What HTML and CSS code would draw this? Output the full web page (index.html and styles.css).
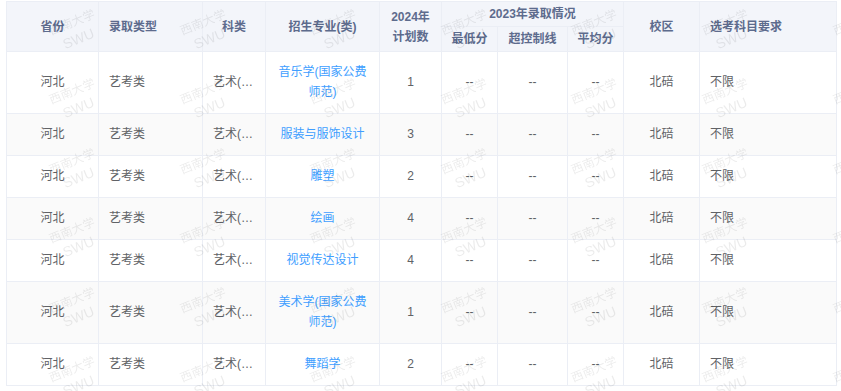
FILE: index.html
```html
<!DOCTYPE html>
<html lang="zh-CN">
<head>
    <meta charset="UTF-8">
    <meta name="viewport" content="width=device-width, initial-scale=1.0">
    <title>招生计划</title>
    <link rel="stylesheet" href="styles.css">
</head>
<body>

    <div class="page">
        <!-- 招生计划表 -->
        <table class="plan-table">
            <colgroup>
                <col style="width: 92px">
                <col style="width: 104px">
                <col style="width: 63px">
                <col style="width: 114px">
                <col style="width: 62px">
                <col style="width: 56px">
                <col style="width: 70px">
                <col style="width: 56px">
                <col style="width: 76px">
                <col style="width: 137px">
            </colgroup>
            <thead>
                <tr>
                    <th rowspan="2">省份</th>
                    <th rowspan="2" class="left">录取类型</th>
                    <th rowspan="2">科类</th>
                    <th rowspan="2">招生专业(类)</th>
                    <th rowspan="2" class="narrow">2024年<br>计划数</th>
                    <th colspan="3">2023年录取情况</th>
                    <th rowspan="2">校区</th>
                    <th rowspan="2" class="left">选考科目要求</th>
                </tr>
                <tr class="sub">
                    <th>最低分</th>
                    <th>超控制线</th>
                    <th>平均分</th>
                </tr>
            </thead>
            <tbody>
                <tr>
                    <td>河北</td><td class="left">艺考类</td><td class="left clip">艺术(不分文理)</td>
                    <td class="major">音乐学(国家公费师范)</td><td>1</td>
                    <td>--</td><td>--</td><td>--</td><td>北碚</td><td class="left">不限</td>
                </tr>
                <tr>
                    <td>河北</td><td class="left">艺考类</td><td class="left clip">艺术(不分文理)</td>
                    <td class="major">服装与服饰设计</td><td>3</td>
                    <td>--</td><td>--</td><td>--</td><td>北碚</td><td class="left">不限</td>
                </tr>
                <tr>
                    <td>河北</td><td class="left">艺考类</td><td class="left clip">艺术(不分文理)</td>
                    <td class="major">雕塑</td><td>2</td>
                    <td>--</td><td>--</td><td>--</td><td>北碚</td><td class="left">不限</td>
                </tr>
                <tr>
                    <td>河北</td><td class="left">艺考类</td><td class="left clip">艺术(不分文理)</td>
                    <td class="major">绘画</td><td>4</td>
                    <td>--</td><td>--</td><td>--</td><td>北碚</td><td class="left">不限</td>
                </tr>
                <tr>
                    <td>河北</td><td class="left">艺考类</td><td class="left clip">艺术(不分文理)</td>
                    <td class="major">视觉传达设计</td><td>4</td>
                    <td>--</td><td>--</td><td>--</td><td>北碚</td><td class="left">不限</td>
                </tr>
                <tr>
                    <td>河北</td><td class="left">艺考类</td><td class="left clip">艺术(不分文理)</td>
                    <td class="major">美术学(国家公费师范)</td><td>1</td>
                    <td>--</td><td>--</td><td>--</td><td>北碚</td><td class="left">不限</td>
                </tr>
                <tr>
                    <td>河北</td><td class="left">艺考类</td><td class="left clip">艺术(不分文理)</td>
                    <td class="major">舞蹈学</td><td>2</td>
                    <td>--</td><td>--</td><td>--</td><td>北碚</td><td class="left">不限</td>
                </tr>
            </tbody>
        </table>
    </div>

    <!-- 水印层 -->
    <div class="watermark" id="watermark"></div>

    <script>
        // 水印平铺：7列 x 6行
        const layer = document.getElementById("watermark");
        for (let i = 0; i < 42; i++) {
            const mark = document.createElement("div");
            mark.className = "mark";
            mark.innerHTML = "<span class=\"mark-cn\">西南大学</span><span class=\"mark-en\">SWU</span>";
            layer.appendChild(mark);
        }
    </script>

</body>
</html>
```

FILE: styles.css
```css
/* 页面基础 */
body {
    margin: 0;
    background-color: #fff;
    font-family: "Liberation Sans", "Noto Sans CJK SC", "Microsoft YaHei", sans-serif;
    font-size: 12px;
    color: #606266;
}

.page {
    padding: 1px 0 0 6px;
}

/* 表格 */
.plan-table {
    width: 831px;
    table-layout: fixed;
    border-collapse: separate;
    border-spacing: 0;
    border-top: 1px solid #ebeef5;
    border-left: 1px solid #ebeef5;
}

.plan-table th,
.plan-table td {
    border-right: 1px solid #ebeef5;
    border-bottom: 1px solid #ebeef5;
    text-align: center;
    line-height: 20px;
}

.plan-table th {
    padding: 2px 10px;
    background-color: #f3f5fa;
    color: #5d6b8d;
    font-weight: bold;
}

/* 窄列的表头去掉左右内边距，避免折行 */
.plan-table .sub th,
.plan-table th.narrow {
    padding-left: 0;
    padding-right: 0;
}

.plan-table td {
    padding: 10px 10px 11px;
}

/* 斑马纹 */
.plan-table tbody tr:nth-child(even) td {
    background-color: #fafafa;
}

.plan-table .left {
    text-align: left;
}

/* 超出省略 */
.plan-table .clip {
    white-space: nowrap;
    overflow: hidden;
    text-overflow: ellipsis;
}

/* 专业名称蓝色 */
.plan-table .major {
    color: #409eff;
}

/* 水印 */
.watermark {
    position: fixed;
    top: -4px;
    left: 10px;
    display: grid;
    grid-template-columns: repeat(7, 130.6px);
    grid-auto-rows: 69.4px;
    pointer-events: none;
}

.mark {
    display: flex;
    flex-direction: column;
    align-items: center;
    justify-content: center;
    transform: rotate(-22deg);
    color: rgba(0, 0, 0, 0.08);
}

.mark-cn {
    font-size: 12px;
    line-height: 17px;
}

.mark-en {
    font-size: 14px;
    line-height: 17px;
}
```
